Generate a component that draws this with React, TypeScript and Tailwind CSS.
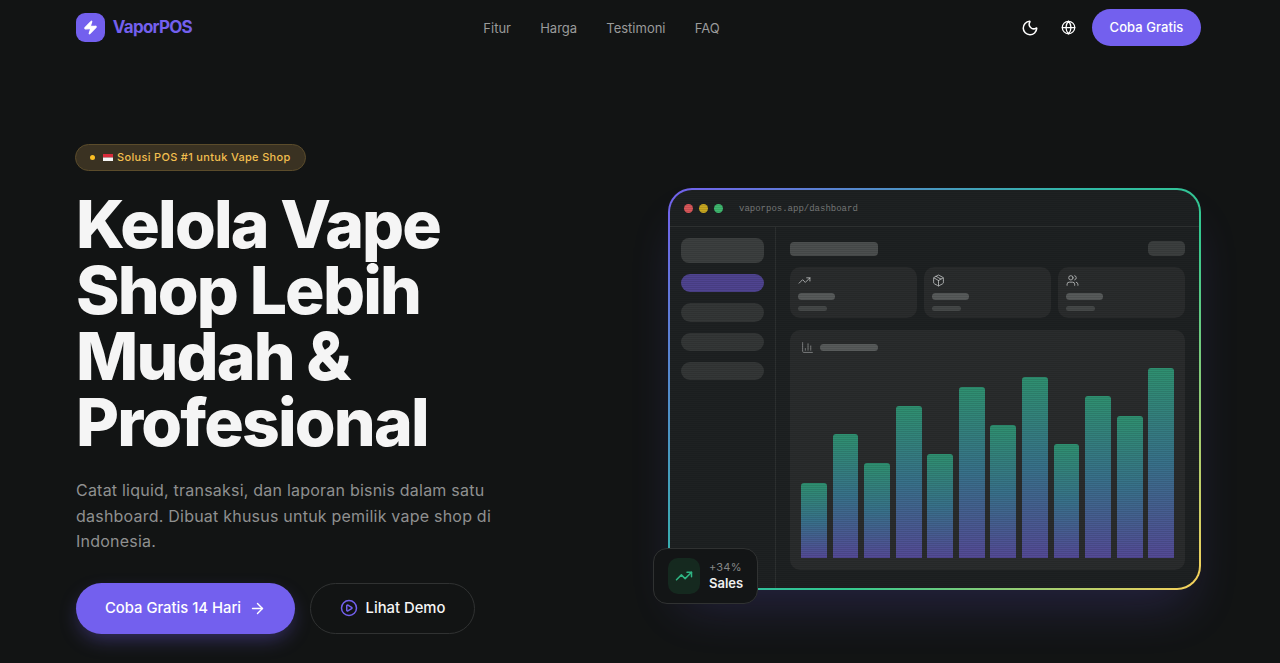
import { ArrowRight, ChartColumn, CirclePlay, Globe, Moon, Package, TrendingUp, Users, Zap } from "lucide-react";

const navLinks = ["Fitur", "Harga", "Testimoni", "FAQ"];
const barHeights = [75, 124, 95, 152, 104, 171, 133, 181, 114, 162, 142, 190];
const statIcons = [TrendingUp, Package, Users];

const Navbar = () => (
  <header className="flex h-[55px] items-center justify-between pl-[76px] pr-[79px]">
    <div className="flex w-[116px] items-center gap-2">
      <div className="flex h-[29px] w-[29px] items-center justify-center rounded-[9px] bg-[#7360ee]">
        <Zap className="h-[15px] w-[15px] fill-white text-white" />
      </div>
      <span className="text-[17px] font-bold tracking-[-0.75px] text-[#7360ee]">VaporPOS</span>
    </div>
    <nav className="ml-[-10px] flex gap-[29.2px] pt-[2px] text-[13px] text-[#9a9b9b]">
      {navLinks.map((link) => (
        <a key={link}>{link}</a>
      ))}
    </nav>
    <div className="flex items-center">
      <Moon className="h-[18px] w-[18px] text-white" />
      <Globe className="ml-[22px] h-[15px] w-[15px] text-white" />
      <button className="ml-4 h-[37px] w-[109px] rounded-full bg-[#7360ee] text-[13px] font-medium tracking-[0.05px] text-white">
        Coba Gratis
      </button>
    </div>
  </header>
);

const Hero = () => (
  <div className="w-[440px] pt-[89px]">
    <div className="ml-[-1px] flex h-[27px] w-[231px] items-center rounded-full border border-[#5b4c2b] bg-[#3a3222] pl-[14px] text-[11px] font-medium tracking-[0.32px] text-[#f2bf4f]">
      <span className="h-[5px] w-[5px] rounded-full bg-[#fbbf24]" />
      <svg viewBox="0 0 10 7" className="ml-2 mr-[4px] h-[7px] w-[10px]">
        <rect width="10" height="3.5" fill="#d92b3a" />
        <rect y="3.5" width="10" height="3.5" fill="#f4f4f4" />
      </svg>
      Solusi POS #1 untuk Vape Shop
    </div>
    <h1 className="mt-[20px] w-[430px] text-[66px] font-extrabold leading-[66px] tracking-[-1.85px] text-[#f5f5f5]">
      Kelola Vape Shop Lebih Mudah & Profesional
    </h1>
    <p className="mt-[23px] w-[425px] text-[16px] leading-[25.6px] tracking-[0.22px] text-[#8f9090]">
      Catat liquid, transaksi, dan laporan bisnis dalam satu dashboard. Dibuat khusus untuk pemilik vape shop di Indonesia.
    </p>
    <div className="mt-[28px] flex gap-[15px]">
      <button className="flex h-[51px] w-[219px] items-center justify-center gap-2 rounded-full bg-[#7360ee] text-[14.8px] font-medium text-white shadow-[0_8px_20px_-4px_rgba(115,96,238,0.4)]">
        Coba Gratis 14 Hari
        <ArrowRight className="h-[17px] w-[17px]" />
      </button>
      <button className="flex h-[51px] w-[165px] items-center justify-center gap-2 rounded-full border border-[#303232] text-[14.8px] font-medium text-[#f5f5f5]">
        <CirclePlay className="h-[18px] w-[18px] text-[#7360ee]" />
        Lihat Demo
      </button>
    </div>
  </div>
);

const Sidebar = () => (
  <aside className="flex w-[106px] shrink-0 flex-col border-r border-[#2d3030] px-[11px] pt-[11px]">
    <div className="h-[25px] rounded-[8px] bg-[#3c3f3f]" />
    <div className="mt-[11px] h-[18px] rounded-full bg-[#4f4490]" />
    <div className="mt-[11px] h-[19px] rounded-full bg-[#343737]" />
    <div className="mt-[11px] h-[18px] rounded-full bg-[#343737]" />
    <div className="mt-[11px] h-[18px] rounded-full bg-[#343737]" />
  </aside>
);

const Dashboard = () => (
  <div className="relative mt-[133px] h-[402px] w-[533px] shrink-0 rounded-[24px] bg-[linear-gradient(135deg,#7360ee,#2fb9a5_45%,#34c98f_62%,#fbd25a)] p-[2px] shadow-[0_28px_50px_-12px_rgba(115,96,238,0.2)]">
    <div className="relative flex h-full flex-col overflow-hidden rounded-[22px] bg-[#1e2122]">
      <div className="flex h-[37px] shrink-0 items-center gap-[5px] border-b border-[#2d3030] pl-[14px]">
        <span className="h-[9px] w-[9px] rounded-full bg-[#d9575a]" />
        <span className="ml-[1px] h-[9px] w-[9px] rounded-full bg-[#c9a820]" />
        <span className="ml-[1px] h-[9px] w-[9px] rounded-full bg-[#3fb86f]" />
        <span className="ml-[11px] pt-[3px] font-['Liberation_Mono',monospace] text-[9px] text-[#777979]">
          vaporpos.app/dashboard
        </span>
      </div>
      <div className="flex min-h-0 flex-1 blur-[0.6px]">
        <Sidebar />
        <main className="flex-1 px-[14px] pt-[14px]">
          <div className="flex items-center justify-between">
            <div className="h-[14px] w-[88px] rounded-[4px] bg-[#4c4f4f]" />
            <div className="h-[15px] w-[37px] rounded-[5px] bg-[#3c3f3f]" />
          </div>
          <div className="mt-[11px] grid grid-cols-3 gap-[7px]">
            {statIcons.map((Icon, i) => (
              <div key={i} className="h-[51px] rounded-[10px] bg-[#2a2c2d] px-[8px] pt-[7px]">
                <Icon className="h-[13px] w-[13px] text-[#c9cbcb]" strokeWidth={1.5} />
                <div className="mt-[6px] h-[7px] w-[37px] rounded-full bg-[#585b5b]" />
                <div className="mt-[6px] h-[5px] w-[29px] rounded-full bg-[#454848]" />
              </div>
            ))}
          </div>
          <div className="mt-[12px] h-[240px] rounded-[10px] bg-[#2a2c2d] px-[11px]">
            <div className="flex h-[34px] items-center gap-[6px]">
              <ChartColumn className="h-[13px] w-[13px] text-[#8f9191]" strokeWidth={1.5} />
              <div className="h-[7px] w-[58px] rounded-full bg-[#585b5b]" />
            </div>
            <div className="mt-[4px] flex h-[190px] items-end gap-[5.7px]">
              {barHeights.map((height, i) => (
                <div
                  key={i}
                  className="flex-1 rounded-t-[3px] bg-[linear-gradient(180deg,#2f9070,#38718a_50%,#544a96)]"
                  style={{ height }}
                />
              ))}
            </div>
          </div>
        </main>
      </div>
      <div className="pointer-events-none absolute inset-0 bg-[repeating-linear-gradient(0deg,rgba(0,0,0,0.1)_0px,rgba(0,0,0,0.1)_1px,transparent_1px,transparent_2px)]" />
    </div>
    <div className="absolute left-[-15px] top-[360px] flex h-[56px] w-[105px] items-center gap-[9px] rounded-[14px] border border-[#303232] bg-[#131516] pl-[14px]">
      <div className="flex h-9 w-8 items-center justify-center rounded-[10px] bg-[#15291f]">
        <TrendingUp className="h-[18px] w-[18px] text-[#2fb583]" />
      </div>
      <div className="flex flex-col pb-[2px]">
        <span className="text-[11px] leading-[16px] tracking-[0.2px] text-[#858787]">+34%</span>
        <span className="text-[13px] font-semibold leading-[17px] text-[#f0f0f0]">Sales</span>
      </div>
    </div>
  </div>
);

const App = () => (
  <div className="h-[663px] overflow-hidden bg-[#121414] font-['Inter',sans-serif]">
    <Navbar />
    <section className="flex justify-between pl-[76px] pr-[79px]">
      <Hero />
      <Dashboard />
    </section>
  </div>
);

export default App;
